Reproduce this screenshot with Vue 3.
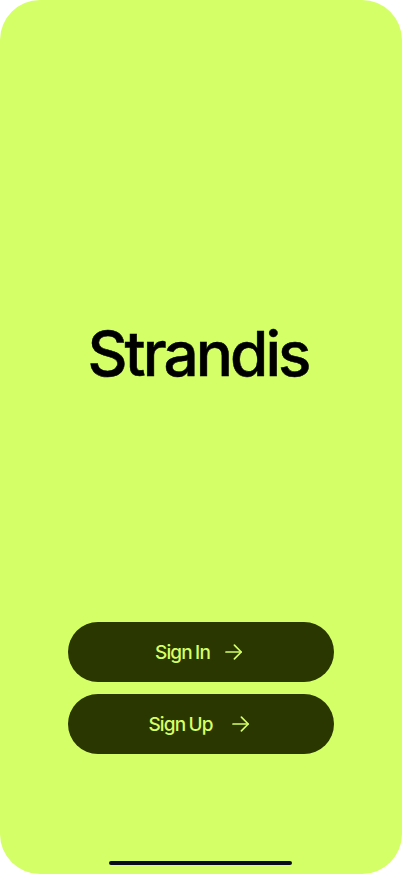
<script setup>
const actions = [
  { label: 'Sign In', gap: 15 },
  { label: 'Sign Up', gap: 19 },
]
</script>

<template>
  <div class="page">
    <main class="hero">
      <h1 class="logo">Strandis</h1>
    </main>
    <div class="actions">
      <button v-for="item in actions" :key="item.label" class="btn" type="button" :style="{ gap: item.gap + 'px' }">
        <span class="label">{{ item.label }}</span>
        <svg class="arrow" width="18" height="18" viewBox="0 0 18 18" fill="none" stroke="currentColor" stroke-width="1.7" stroke-linecap="round" stroke-linejoin="round">
          <path d="M1 9H16" />
          <path d="M9.4 2.2 16.2 9l-6.8 6.8" />
        </svg>
      </button>
    </div>
    <div class="home-bar"></div>
  </div>
</template>

<style scoped>
.page {
  width: 402px;
  height: 874px;
  box-sizing: border-box;
  background: #d4ff66;
  border-radius: 40px;
  overflow: hidden;
  display: flex;
  flex-direction: column;
  align-items: center;
  font-family: Inter, "Liberation Sans", sans-serif;
}
.hero {
  height: 622px;
  padding-top: 86px;
  padding-right: 6px;
  box-sizing: border-box;
  display: flex;
  align-items: center;
  justify-content: center;
  align-self: stretch;
}
.logo {
  margin: 0;
  font-size: 62px;
  font-weight: 500;
  line-height: 1;
  letter-spacing: -0.048em;
  color: #000;
  -webkit-text-stroke: 0.5px #000;
}
.actions {
  display: flex;
  flex-direction: column;
  gap: 12px;
  width: 266px;
}
.btn {
  height: 60px;
  border: 0;
  border-radius: 30px;
  background: #2b3700;
  color: #d4ff66;
  display: flex;
  align-items: center;
  justify-content: center;
  padding: 0 4px 0 0;
  font-family: inherit;
}
.label {
  font-size: 19px;
  font-weight: 450;
  letter-spacing: -0.045em;
  word-spacing: -1px;
}
.home-bar {
  width: 183px;
  height: 4px;
  border-radius: 2px;
  background: #0a0d1a;
  margin-top: 107px;
  margin-right: 2px;
}
</style>

<style>
html, body {
  background: #fff;
}
</style>
